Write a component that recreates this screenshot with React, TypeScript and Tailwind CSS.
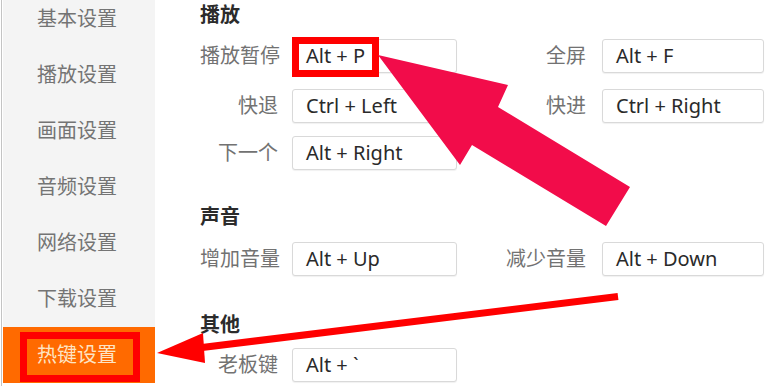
import React from 'react';

type Shortcut = { label: string; keys: string };
type Row = { left: Shortcut; right?: Shortcut; mt: string };

const sideItems = ['基本设置', '播放设置', '画面设置', '音频设置', '网络设置', '下载设置', '热键设置'];

const font = { fontFamily: '"Noto Sans", "Noto Sans CJK SC", sans-serif' };

function KeyBox({ keys, width }: { keys: string; width: string }) {
    return (
        <div
            className={`${width} h-[34px] flex items-center pl-[13px] rounded-[3px] border border-[#d9d9d9] bg-white shadow-[0_1px_1px_rgba(0,0,0,0.06)] text-[20px] text-[#2a2a2a]`}
        >
            {keys}
        </div>
    );
}

function ShortcutRow({ row }: { row: Row }) {
    return (
        <div className={`flex items-center h-[34px] ${row.mt}`}>
            <span className="w-[78px] text-right text-[20px] leading-[22px] text-[#727272] whitespace-nowrap">{row.left.label}</span>
            <div className="ml-[14px]">
                <KeyBox keys={row.left.keys} width="w-[165px]" />
            </div>
            {row.right && (
                <>
                    <span className="w-[129px] text-right text-[20px] leading-[22px] text-[#727272] whitespace-nowrap">{row.right.label}</span>
                    <div className="ml-[16px]">
                        <KeyBox keys={row.right.keys} width="w-[162px]" />
                    </div>
                </>
            )}
        </div>
    );
}

function SectionTitle({ title, mt }: { title: string; mt: string }) {
    return <h3 className={`h-[22px] leading-[22px] text-[20px] font-bold text-[#2b2b2b] ${mt}`}>{title}</h3>;
}

export default function App() {
    return (
        <div className="relative w-[780px] h-[386px] overflow-hidden bg-white flex" style={font}>
            {/* sidebar */}
            <aside className="ml-px w-[154px] border-l border-[#c4c4c4] pl-px bg-white shrink-0">
                <div className="h-full bg-[#f4f4f4]">
                    <ul className="-mt-[9px]">
                        {sideItems.map((item, i) => {
                            const active = i === sideItems.length - 1;
                            return (
                                <li
                                    key={item}
                                    className={`relative h-[56px] flex items-center pl-[34px] text-[20px] ${
                                        active ? 'bg-[#ff6a00] text-[#fde4c4]' : 'text-[#747474]'
                                    }`}
                                >
                                    {item}
                                    {active && (
                                        <span className="absolute left-[17px] top-[5px] w-[120px] h-[50px] border-[7px] border-[#ff0000]" />
                                    )}
                                </li>
                            );
                        })}
                    </ul>
                </div>
            </aside>

            {/* content */}
            <main className="flex-1 pl-[45px] pt-[4px]">
                <SectionTitle title="播放" mt="mt-0" />
                <ShortcutRow row={{ left: { label: '播放暂停', keys: 'Alt + P' }, right: { label: '全屏', keys: 'Alt + F' }, mt: 'mt-[13px]' }} />
                <ShortcutRow row={{ left: { label: '快退', keys: 'Ctrl + Left' }, right: { label: '快进', keys: 'Ctrl + Right' }, mt: 'mt-[16px]' }} />
                <ShortcutRow row={{ left: { label: '下一个', keys: 'Alt + Right' }, mt: 'mt-[13px]' }} />

                <SectionTitle title="声音" mt="mt-[36px]" />
                <ShortcutRow row={{ left: { label: '增加音量', keys: 'Alt + Up' }, right: { label: '减少音量', keys: 'Alt + Down' }, mt: 'mt-[14px]' }} />

                <SectionTitle title="其他" mt="mt-[38px]" />
                <ShortcutRow row={{ left: { label: '老板键', keys: 'Alt + `' }, mt: 'mt-[12px]' }} />
            </main>

            {/* annotations */}
            <svg className="absolute inset-0 pointer-events-none" width="780" height="386" viewBox="0 0 780 386">
                <rect x="295.5" y="40.5" width="80" height="33" fill="none" stroke="#ff0000" strokeWidth="7" />
                <polygon
                    points="378,55 508,85 498,107 630,187 606,226 472,145 460,165"
                    fill="#f20c4a"
                />
                <line x1="618" y1="296.5" x2="198" y2="348" stroke="#ff0000" strokeWidth="7" />
                <polygon points="157,353 203,333 205,363" fill="#ff0000" />
            </svg>
        </div>
    );
}
